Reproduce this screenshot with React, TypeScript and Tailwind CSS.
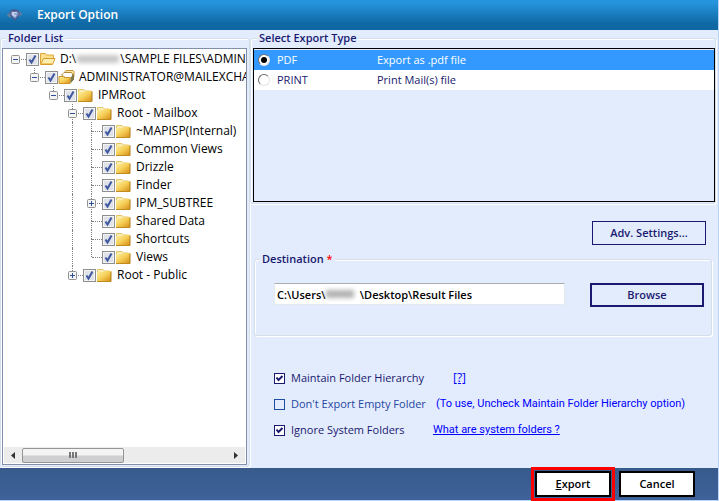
import type { ReactNode } from "react";

type FolderKind = "open" | "stack" | "closed";

interface TreeRow {
  label: ReactNode;
  name: string;
  level: number;
  kind: FolderKind;
  toggle?: "plus" | "minus";
  more?: boolean;
  guides?: number[];
}

const rows: TreeRow[] = [
  {
    name: "Sample files",
    label: (
      <>
        D:\<span className="mx-px inline-block h-2 w-[42px] bg-[#c8c8c8] blur-[2px]" />\SAMPLE FILES\ADMINI
      </>
    ),
    level: 0,
    kind: "open",
    toggle: "minus",
  },
  { name: "Administrator", label: "ADMINISTRATOR@MAILEXCHA", level: 1, kind: "stack", toggle: "minus" },
  { name: "IPMRoot", label: "IPMRoot", level: 2, kind: "closed", toggle: "minus" },
  { name: "Root - Mailbox", label: "Root - Mailbox", level: 3, kind: "closed", toggle: "minus", more: true },
  { name: "MAPISP", label: "~MAPISP(Internal)", level: 4, kind: "closed", more: true, guides: [3] },
  { name: "Common Views", label: "Common Views", level: 4, kind: "closed", more: true, guides: [3] },
  { name: "Drizzle", label: "Drizzle", level: 4, kind: "closed", more: true, guides: [3] },
  { name: "Finder", label: "Finder", level: 4, kind: "closed", more: true, guides: [3] },
  { name: "IPM_SUBTREE", label: "IPM_SUBTREE", level: 4, kind: "closed", toggle: "plus", more: true, guides: [3] },
  { name: "Shared Data", label: "Shared Data", level: 4, kind: "closed", more: true, guides: [3] },
  { name: "Shortcuts", label: "Shortcuts", level: 4, kind: "closed", more: true, guides: [3] },
  { name: "Views", label: "Views", level: 4, kind: "closed", guides: [3] },
  { name: "Root - Public", label: "Root - Public", level: 3, kind: "closed", toggle: "plus" },
];

function FolderIcon({ kind }: { kind: FolderKind }) {
  if (kind === "open") {
    return (
      <svg width="17" height="16" viewBox="0 0 17 16" className="shrink-0" aria-hidden="true">
        <path d="M1.500 13V2.500h5l1 1.500h7v3" fill="#fbdf8c" stroke="#e0a63a" />
        <path d="M1.500 13.500 4.500 7.500h11.500l-2.500 6z" fill="#fdeeb0" stroke="#d99a2e" />
        <path d="M3 12.500h10" stroke="#f3c860" />
      </svg>
    );
  }
  if (kind === "stack") {
    return (
      <svg width="17" height="16" viewBox="0 0 17 16" className="shrink-0" aria-hidden="true">
        <path d="M6.500 3.500 8 1.500h7l1 1.500v5l-3 3z" fill="#fbe9a8" stroke="#c79a35" />
        <path d="M3.500 6 6 3.500h7.500l1 1.500v5l-2 2z" fill="#fff" stroke="#b08a3a" />
        <path d="M1 7.500h4l1 1h6v6H1z" fill="url(#folder-fill)" stroke="#d2951f" />
        <path d="M12.500 8.500 16 5v5.500l-3.500 4z" fill="#7f7a45" />
      </svg>
    );
  }
  return (
    <svg width="17" height="16" viewBox="0 0 17 16" className="shrink-0" aria-hidden="true">
      <path d="M1.500 5V2.500h5.500L8.500 4H13.500v1" fill="#fbeeb4" stroke="#e6c468" />
      <path d="M1 5h6l1-1h7v10H1z" fill="url(#folder-fill)" />
      <path d="M1 14.500h14" fill="none" stroke="#c08c20" />
      <path d="M15 4.500v10" fill="none" stroke="#b07c1a" />
    </svg>
  );
}

function TreeItem({ row }: { row: TreeRow }) {
  const id = "node-" + row.name.replace(/\W/g, "");
  return (
    <li className="flex h-[18px] items-center">
      {Array.from({ length: row.level }, (_, i) => (
        <span key={i} className="flex h-full w-[19px] shrink-0 justify-center">
          {row.guides?.includes(i) && <span className="h-full border-l border-dotted border-[#808080]" />}
        </span>
      ))}
      <span className="grid h-full w-5 shrink-0 grid-cols-[9px_1px_10px] grid-rows-[9px_9px]">
        <span
          className={
            "col-start-2 row-start-1 " + (row.level > 0 ? "border-l border-dotted border-[#808080]" : "")
          }
        />
        <span
          className={"col-start-2 row-start-2 " + (row.more ? "border-l border-dotted border-[#808080]" : "")}
        />
        <span className="col-start-3 row-start-2 border-t border-dotted border-[#808080]" />
        {row.toggle && (
          <button
            type="button"
            aria-label={row.toggle === "plus" ? "Expand" : "Collapse"}
            className="z-10 col-span-3 col-start-1 row-span-2 row-start-1 ml-[5px] mt-[5px] h-[9px] w-[9px] bg-white"
          >
            <svg width="9" height="9" viewBox="0 0 9 9" className="block">
              <rect x=".5" y=".5" width="8" height="8" rx="1" fill="#f4f4f4" stroke="#919191" />
              <path d={row.toggle === "plus" ? "M2 4.500h5M4.500 2v5" : "M2 4.500h5"} stroke="#2f4f9d" />
            </svg>
          </button>
        )}
      </span>
      <span className="grid shrink-0">
        <input
          id={id}
          type="checkbox"
          defaultChecked
          className="peer col-start-1 row-start-1 h-[13px] w-[13px] appearance-none border border-[#8e8f8f] bg-[#dfe2e8] shadow-[inset_0_0_0_1px_#f4f4f4]"
        />
        <svg
          width="13"
          height="13"
          viewBox="0 0 13 13"
          className="pointer-events-none invisible col-start-1 row-start-1 peer-checked:visible"
          aria-hidden="true"
        >
          <path d="M3.500 6.500 5.500 9.500 9.500 2.500" fill="none" stroke="#3f57a0" strokeWidth="2" />
        </svg>
      </span>
      <FolderIcon kind={row.kind} />
      <label htmlFor={id} className="ml-1 whitespace-pre text-[12px] text-black">
        {row.label}
      </label>
    </li>
  );
}

function Option({ id, label, checked, muted }: { id: string; label: string; checked?: boolean; muted?: boolean }) {
  return (
    <div className="flex items-center gap-1.5 whitespace-nowrap">
      <span className="grid">
        <input
          id={id}
          type="checkbox"
          defaultChecked={checked}
          className={
            "peer col-start-1 row-start-1 h-[11px] w-[11px] appearance-none border " +
            (muted ? "border-[#1c4da0]" : "border-[#191970] bg-white")
          }
        />
        <svg
          width="11"
          height="11"
          viewBox="0 0 11 11"
          className="pointer-events-none invisible col-start-1 row-start-1 peer-checked:visible"
          aria-hidden="true"
        >
          <path d="M2.500 4.500 4.500 7 8.500 3" fill="none" stroke="#191970" strokeWidth="2" />
        </svg>
      </span>
      <label htmlFor={id} className={muted ? "text-[#2446a0]" : "text-[#191970]"}>
        {label}
      </label>
    </div>
  );
}

function ExportType({ id, name, detail, selected }: { id: string; name: string; detail: string; selected?: boolean }) {
  return (
    <label
      htmlFor={id}
      className={
        "flex h-5 items-center pl-1 " + (selected ? "bg-[#3399ff] text-white" : "bg-white text-[#191970]")
      }
    >
      <span className="grid shrink-0">
        <input
          id={id}
          type="radio"
          name="export-type"
          defaultChecked={selected}
          className="peer col-start-1 row-start-1 h-3 w-3 appearance-none rounded-full border border-b-[#e3e3e3] border-l-[#696969] border-r-[#e3e3e3] border-t-[#696969] bg-white"
        />
        <span className="invisible col-start-1 row-start-1 m-[3px] h-1.5 w-1.5 rounded-full bg-black peer-checked:visible" />
      </span>
      <span className="ml-[7px] w-[100px] shrink-0">{name}</span>
      <span>{detail}</span>
    </label>
  );
}

const groupBox =
  "min-w-0 rounded-[3px] border border-[#d3dfe9] shadow-[1px_1px_0_#fff,inset_1px_1px_0_#fff]";

export default function App() {
  return (
    <div className="flex flex-col border-b border-r border-[#b9d4f6] bg-[#e3ecfd] font-['Open_Sans','Noto_Sans',sans-serif] text-[11px] leading-4 text-[#191970]">
      <svg width="0" height="0" className="absolute" aria-hidden="true">
        <defs>
          <linearGradient id="folder-fill" x1="0" y1="0" x2="1" y2="1">
            <stop offset="0" stopColor="#fdf0a8" />
            <stop offset=".5" stopColor="#f6cf57" />
            <stop offset="1" stopColor="#d68f17" />
          </linearGradient>
        </defs>
      </svg>

      <header className="flex h-[30px] items-center gap-[15px] bg-linear-to-b from-[#2594dc] from-10% to-[#0f68a3] to-80% pl-[7px]">
        <svg width="15" height="14" viewBox="0 0 15 14" aria-hidden="true">
          <path d="M0 7.500 5 2 3.500 10zM15 6l-4-4 1 7z" fill="#6d8099" />
          <path d="M3 2.500 7 1l5 1.500 1 4L8 13 2.500 7z" fill="#46588c" />
          <path d="M4 3.500h7l1 3L8 11 3.500 6.500z" fill="#6f87c0" />
          <path d="M5 4h5v1.500H7v1h3L8 9.500 5 7z" fill="#c3d0ea" />
        </svg>
        <h1 className="text-[12px] font-semibold text-white">Export Option</h1>
      </header>

      <main className="flex h-[438px]">
        <fieldset className={"mb-px flex w-[250px] shrink-0 flex-col " + groupBox}>
          <legend className="ml-[5px] bg-[#e3ecfd] px-0.5 font-semibold">Folder List</legend>
          <div className="mb-px ml-px mr-0.5 mt-0.5 flex h-[418px] flex-col border border-[#828fa8] bg-white">
            <ul className="flex-1 overflow-hidden pl-[3px] pt-px">
              {rows.map((row) => (
                <TreeItem key={row.name} row={row} />
              ))}
            </ul>
            <div className="mx-px mb-px flex h-4 items-center bg-[#ececec]">
              <button type="button" aria-label="Scroll left" className="flex h-4 w-[18px] items-center justify-center">
                <svg width="4" height="7" viewBox="0 0 4 7">
                  <path d="M4 0v7L0 3.500z" fill="#333" />
                </svg>
              </button>
              <div className="flex h-[15px] w-[102px] items-center justify-center gap-px rounded-[2px] border border-[#959595] bg-linear-to-b from-[#f4f4f4] from-45% to-[#cfcfd1] to-55%">
                <span className="h-1.5 w-0.5 bg-[#777]" />
                <span className="h-1.5 w-0.5 bg-[#777]" />
                <span className="h-1.5 w-0.5 bg-[#777]" />
              </div>
              <button
                type="button"
                aria-label="Scroll right"
                className="ml-auto flex h-4 w-[18px] items-center justify-center"
              >
                <svg width="4" height="7" viewBox="0 0 4 7">
                  <path d="M0 0v7l4-3.500z" fill="#333" />
                </svg>
              </button>
            </div>
          </div>
        </fieldset>

        <div className="flex min-w-0 flex-1 flex-col">
          <fieldset className={"mr-0.5 " + groupBox}>
            <legend className="ml-1.5 bg-[#e3ecfd] px-0.5 font-semibold">Select Export Type</legend>
            <div className="mb-px ml-0.5 mt-0.5 h-[154px] border border-black pt-px">
              <ExportType id="type-pdf" name="PDF" detail="Export as .pdf file" selected />
              <ExportType id="type-print" name="PRINT" detail="Print Mail(s) file" />
            </div>
          </fieldset>

          <button
            type="button"
            className="mr-3 mt-[17px] h-6 w-[114px] self-end border border-[#191970] font-semibold"
          >
            Adv. Settings...
          </button>

          <fieldset className={"ml-1 mr-1.5 mt-[6px] " + groupBox}>
            <legend className="ml-[5px] bg-[#e3ecfd] px-0.5 font-semibold">
              <label htmlFor="destination">
                Destination <span className="text-[#ff0000]">*</span>
              </label>
            </legend>
            <div className="mb-7 mt-4 flex items-start pl-[19px] pr-[7px]">
              <div className="relative min-w-0 flex-1">
                <input
                  id="destination"
                  type="text"
                  defaultValue={"C:\\Users\\            \\Desktop\\Result Files"}
                  className="block h-[22px] w-full border border-[#e3e9ef] border-t-[#abadb3] bg-white px-0.5 font-semibold text-black outline-none"
                />
                <span className="absolute left-[52px] top-[7px] h-2 w-7 bg-[#b4b4b4] blur-[2px]" />
              </div>
              <button
                type="button"
                className="ml-[25px] h-6 w-[114px] shrink-0 border-2 border-[#191970] font-semibold"
              >
                Browse
              </button>
            </div>
          </fieldset>

          <div className="mt-[34px] flex flex-col gap-2.5 pl-6">
            <div className="flex items-center">
              <div className="w-[179px] shrink-0">
                <Option id="maintain" label="Maintain Folder Hierarchy" checked />
              </div>
              <a href="#hierarchy" className="text-[12px] text-[#0000ff] underline">
                [?]
              </a>
            </div>
            <div className="flex items-center">
              <div className="w-[162px] shrink-0">
                <Option id="skip-empty" label="Don't Export Empty Folder" muted />
              </div>
              <span className="whitespace-nowrap font-['Roboto','Liberation_Sans',sans-serif] text-[#0000ff]">
                (To use, Uncheck Maintain Folder Hierarchy option)
              </span>
            </div>
            <div className="flex items-center">
              <div className="w-[159px] shrink-0">
                <Option id="ignore-system" label="Ignore System Folders" checked />
              </div>
              <a
                href="#system-folders"
                className="font-['Roboto','Liberation_Sans',sans-serif] text-[#0000ff] underline"
              >
                What are system folders ?
              </a>
            </div>
          </div>
        </div>
      </main>

      <footer className="flex h-8 items-center justify-end gap-2 bg-linear-to-b from-[#385b8c] to-[#3e6299] pr-[23px]">
        <button
          type="button"
          className="h-[26px] w-[76px] border-2 border-black bg-white font-semibold text-black outline-3 outline-offset-1 outline-[#ff0000]"
        >
          <span className="underline">E</span>xport
        </button>
        <button type="button" className="h-[26px] w-[76px] border-2 border-black bg-white font-semibold text-black">
          Cancel
        </button>
      </footer>
    </div>
  );
}
